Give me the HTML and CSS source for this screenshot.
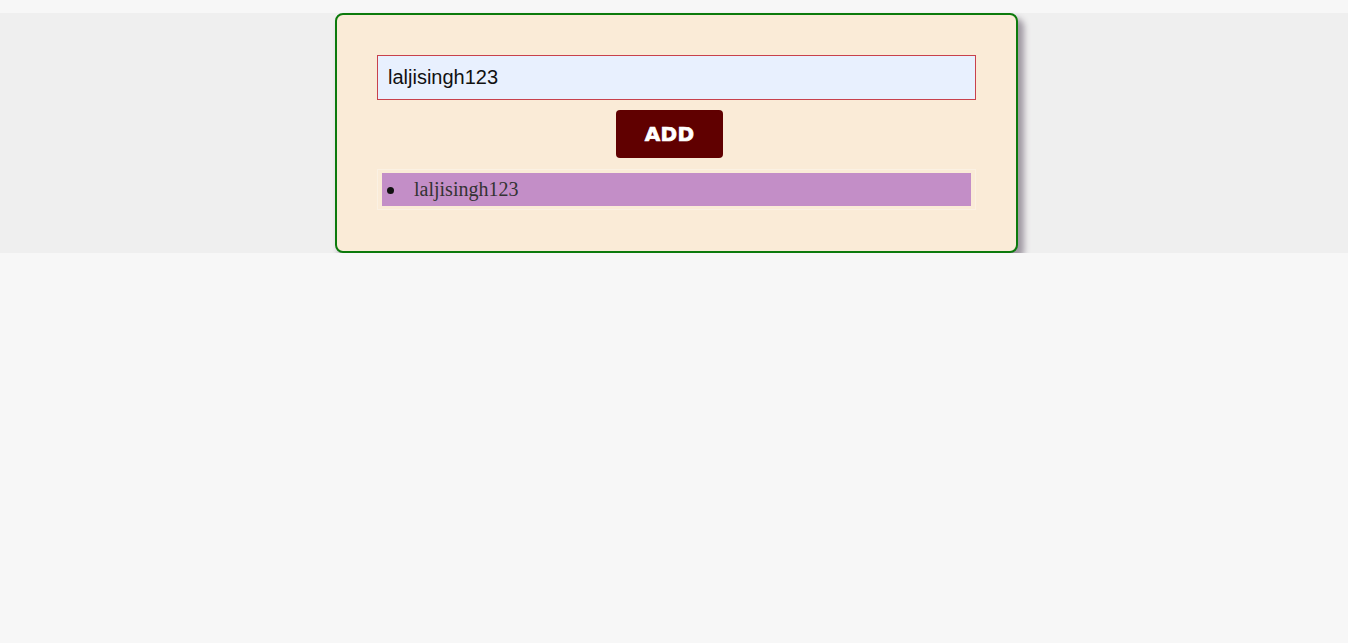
FILE: index.html
```html
<!DOCTYPE html>
<html>
<head>
<meta charset="utf-8">
<link rel="stylesheet" href="styles.css">
</head>
<body>
<div class="band">
  <div class="card">
    <div class="field-wrap"><input class="field" type="text" value="laljisingh123"></div>
    <div class="actions"><button class="add">ADD</button></div>
    <ul class="list">
      <li class="item">laljisingh123</li>
    </ul>
  </div>
</div>
</body>
</html>
```
FILE: styles.css
```css
html, body {
  margin: 0;
  padding: 0;
  background: #f7f7f7;
}
.band {
  margin-top: 13px;
  background: #efefef;
  display: flex;
  justify-content: center;
  height: 240px;
}
.card {
  box-sizing: border-box;
  width: 683px;
  height: 240px;
  margin-left: 5px;
  background: #faebd7;
  border: 2px solid #0c7a0c;
  border-radius: 8px;
  box-shadow: 5px 6px 6px 1px #9f98a2;
  padding: 40px 40px 0 40px;
  display: flex;
  flex-direction: column;
}
.field-wrap {
  box-sizing: border-box;
  width: 599px;
  height: 45px;
  border: 1px solid #c8414c;
  background: #e8f0fe;
  display: flex;
}
.field {
  -webkit-appearance: none;
  appearance: none;
  flex: 1;
  min-width: 0;
  margin: 0;
  border: none;
  background: transparent;
  padding: 0 10px;
  font-family: "Liberation Sans", Arial, sans-serif;
  font-size: 20px;
  color: #111;
  outline: none;
}
.actions {
  display: flex;
  justify-content: center;
  margin-top: 10px;
}
.add {
  width: 107px;
  height: 48px;
  margin-right: 14px;
  background: #600000;
  color: #fff;
  border: none;
  border-radius: 4px;
  font-family: "DejaVu Sans", "Liberation Sans", sans-serif;
  font-weight: bold;
  font-size: 20px;
  letter-spacing: 0.3px;
  -webkit-text-stroke: 0.7px #fff;
  padding: 0;
}
.list {
  list-style: none;
  margin: 11px 0 0 0;
  padding: 3px 4px;
  border: 1px solid rgba(255, 255, 255, 0.3);
}
.item {
  height: 33px;
  background: #c38ec7;
  font-family: "Liberation Serif", "Times New Roman", serif;
  font-size: 20px;
  color: #333;
  display: flex;
  align-items: center;
  padding-left: 32px;
  position: relative;
}
.item::before {
  content: "";
  position: absolute;
  left: 5px;
  top: 14px;
  width: 7px;
  height: 7px;
  border-radius: 50%;
  background: #111;
}
```
